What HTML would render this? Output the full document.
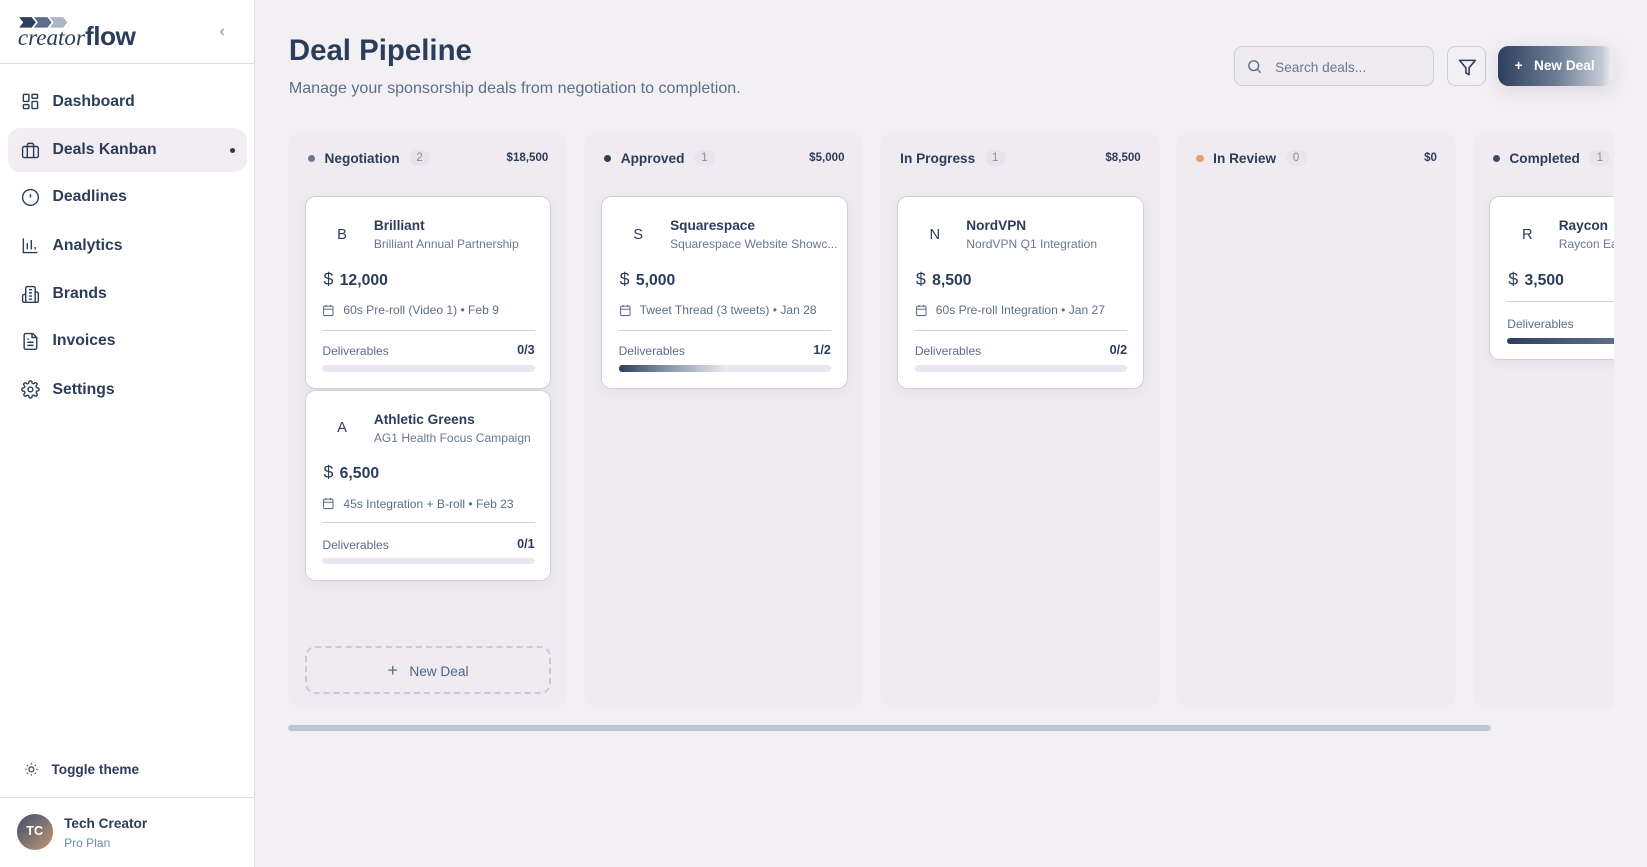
<!DOCTYPE html>
<html><head><meta charset="utf-8">
<style>
html{zoom:1.0504}
*{box-sizing:border-box;margin:0;padding:0}
body{width:1568px;height:825px;overflow:hidden;background:#f3f0f4;font-family:"Liberation Sans",sans-serif;color:#2c3d5a;position:relative}
.side{position:absolute;left:0;top:0;width:243px;height:825px;background:#fff;border-right:1px solid #e0dce6}
.logo{position:absolute;left:17px;top:14px}
.chev{position:absolute;left:209px;top:22px;color:#7b8aa3;font-size:15px}
.hr{position:absolute;left:0;width:242px;height:1px;background:#e0dce6}
.nav{position:absolute;left:8px;width:227px;height:42px;border-radius:12px;display:flex;align-items:center;padding-left:12px;font-size:15px;font-weight:600;color:#2c3d5a}
.nav svg{width:18px;height:18px;margin-right:12px;stroke:#2c3d5a;fill:none;stroke-width:1.8}
.nav.act{background:#f1edf3}
.dot{position:absolute;right:11px;top:19px;width:5px;height:5px;border-radius:50%;background:#2c3d5a}
.main h1{position:absolute;left:275px;top:32px;font-size:28px;font-weight:700;color:#2c3d5a}
.sub{position:absolute;left:275px;top:75px;font-size:15.3px;color:#5d6e88}
.search{position:absolute;left:1175px;top:44px;width:190px;height:38px;border:1px solid #c8d0de;border-radius:8px;background:#efecf1;font-size:13px;color:#6a7891;padding:12px 0 0 38px}
.search svg{position:absolute;left:10px;top:10px}
.filt{position:absolute;left:1378px;top:44px;width:37px;height:38px;border:1px solid #c8d0de;border-radius:8px;background:#f3f0f4}
.filt svg{position:absolute;left:9px;top:10px}
.nd{position:absolute;left:1426px;top:44px;width:110px;height:38px;border-radius:10px;background:linear-gradient(90deg,#2e3f5e 0%,#6a7b92 50%,#c3cad6 90%,rgba(243,240,244,0) 100%);color:#fff;font-size:13px;font-weight:700;padding:11px 0 0 16px;box-shadow:0 4px 18px rgba(120,110,140,.2)}
.board{position:absolute;left:274px;top:126px;width:1263px;height:550px;overflow:hidden}
.col{position:absolute;top:0;width:266px;height:548px;background:#efebf1;border-radius:12px}
.ch{position:absolute;left:19px;top:17px;font-size:13px;font-weight:600;color:#2c3d5a;display:flex;align-items:center}
.ch i{width:7px;height:7px;border-radius:50%;display:inline-block;margin-right:9px}
.ch b{font-weight:400;font-size:11px;color:#8090a5;background:#e8e4ec;border-radius:10px;padding:2px 7px;margin-left:9px}
.tot{position:absolute;right:18px;top:19px;font-size:11px;color:#2c3d5a;font-weight:600}
.card{position:absolute;left:16px;width:235px;background:#fff;border:1px solid #c9d1de;border-radius:10px;box-shadow:0 3px 10px rgba(120,110,140,.08)}
.lt{position:absolute;left:30px;top:28px;font-size:14px;color:#2c3d5a}
.nm{position:absolute;left:65px;top:20px;font-size:13px;font-weight:700;color:#2c3d5a;white-space:nowrap}
.ds{position:absolute;left:65px;top:38px;font-size:11.5px;color:#6a7891;white-space:nowrap}
.amt{position:absolute;left:17px;top:68px;font-size:15px;font-weight:700;color:#2c3d5a}
.amt span{font-size:17px;font-weight:400;margin-right:6px}
.cal{position:absolute;left:16px;top:101px;font-size:11.5px;color:#5d6e88;display:flex;align-items:center;white-space:nowrap}
.cal svg{margin-right:8px}
.div{position:absolute;left:16px;right:15px;height:1px;background:#c9d1de}
.dl{position:absolute;left:16px;font-size:11.5px;color:#5d6e88}
.dn{position:absolute;right:15px;font-size:12px;color:#2c3d5a;font-weight:600}
.bar{position:absolute;left:16px;right:15px;height:6px;border-radius:3px;background:#ebe7ee;overflow:hidden}
.bar i{display:block;height:100%;background:linear-gradient(90deg,#2e3f5e,#8f9db0,#ebe7ee)}
</style></head><body>
<div class="side">
 <div class="logo">
  <svg width="112" height="30" viewBox="0 0 112 30"><polygon points="1,2 13,2 17,7 13,12 1,12 5,7" fill="#2e3f5e"/><polygon points="15,2 28,2 32,7 28,12 15,12 19,7" fill="#5d6e88"/><polygon points="30,2 43,2 47,7 43,12 30,12 34,7" fill="#aab5c5"/></svg>
  <div style="position:absolute;left:0;top:6px;white-space:nowrap;color:#2c3d5a"><span style="font-family:'Liberation Serif',serif;font-style:italic;font-size:22px">creator</span><span style="font-size:25px;font-weight:700;letter-spacing:-0.5px">flow</span></div>
 </div>
 <div class="chev">‹</div>
 <div class="hr" style="top:60px"></div>
 <div class="nav" style="top:76px"><svg viewBox="0 0 24 24"><rect x="3" y="3" width="7" height="9" rx="1"/><rect x="14" y="3" width="7" height="5" rx="1"/><rect x="14" y="12" width="7" height="9" rx="1"/><rect x="3" y="16" width="7" height="5" rx="1"/></svg>Dashboard</div>
 <div class="nav act" style="top:122px"><svg viewBox="0 0 24 24"><rect x="2" y="7" width="20" height="14" rx="2"/><path d="M16 21V5a2 2 0 0 0-2-2h-4a2 2 0 0 0-2 2v16"/></svg>Deals Kanban<span class="dot"></span></div>
 <div class="nav" style="top:167px"><svg viewBox="0 0 24 24"><circle cx="12" cy="12" r="10"/><path d="M12 8v4M12 16h.01"/></svg>Deadlines</div>
 <div class="nav" style="top:213px"><svg viewBox="0 0 24 24"><path d="M3 3v18h18M8 17V9M13 17V5M18 17v-3"/></svg>Analytics</div>
 <div class="nav" style="top:259px"><svg viewBox="0 0 24 24"><path d="M6 22V4a2 2 0 0 1 2-2h8a2 2 0 0 1 2 2v18z"/><path d="M6 12H4a2 2 0 0 0-2 2v6a2 2 0 0 0 2 2h2M18 9h2a2 2 0 0 1 2 2v9a2 2 0 0 1-2 2h-2M10 6h4M10 10h4M10 14h4M10 18h4"/></svg>Brands</div>
 <div class="nav" style="top:304px"><svg viewBox="0 0 24 24"><path d="M15 2H6a2 2 0 0 0-2 2v16a2 2 0 0 0 2 2h12a2 2 0 0 0 2-2V7z"/><path d="M14 2v5h5M8 13h8M8 17h8M8 9h2"/></svg>Invoices</div>
 <div class="nav" style="top:350px"><svg viewBox="0 0 24 24"><circle cx="12" cy="12" r="3"/><path d="M19.4 15a1.7 1.7 0 0 0 .3 1.8l.1.1a2 2 0 1 1-2.8 2.8l-.1-.1a1.7 1.7 0 0 0-2.8 1.2V21a2 2 0 1 1-4 0v-.1a1.7 1.7 0 0 0-2.8-1.2l-.1.1a2 2 0 1 1-2.8-2.8l.1-.1a1.7 1.7 0 0 0-1.2-2.8H3a2 2 0 1 1 0-4h.1a1.7 1.7 0 0 0 1.2-2.8l-.1-.1a2 2 0 1 1 2.8-2.8l.1.1a1.7 1.7 0 0 0 2.8-1.2V3a2 2 0 1 1 4 0v.1a1.7 1.7 0 0 0 2.8 1.2l.1-.1a2 2 0 1 1 2.8 2.8l-.1.1a1.7 1.7 0 0 0 1.2 2.8H21a2 2 0 1 1 0 4h-.1a1.7 1.7 0 0 0-1.5 1z"/></svg>Settings</div>
 <div style="position:absolute;left:23px;top:725px;font-size:13px;font-weight:600;display:flex;align-items:center"><svg width="14" height="14" viewBox="0 0 24 24" fill="none" stroke="#2c3d5a" stroke-width="2" style="margin-right:12px"><circle cx="12" cy="12" r="4"/><path d="M12 2v2M12 20v2M4.9 4.9l1.4 1.4M17.7 17.7l1.4 1.4M2 12h2M20 12h2M4.9 19.1l1.4-1.4M17.7 6.3l1.4-1.4"/></svg>Toggle theme</div>
 <div class="hr" style="top:759px"></div>
 <div style="position:absolute;left:16px;top:775px;width:34px;height:34px;border-radius:50%;background:linear-gradient(135deg,#3e4f6e,#c49574);color:#fff;font-size:12px;font-weight:700;text-align:center;line-height:34px">TC</div>
 <div style="position:absolute;left:61px;top:777px;font-size:13px;font-weight:600">Tech Creator</div>
 <div style="position:absolute;left:61px;top:796px;font-size:11.5px;color:#6a8aa8">Pro Plan</div>
</div>

<div class="main">
 <h1>Deal Pipeline</h1>
 <div class="sub">Manage your sponsorship deals from negotiation to completion.</div>
 <div class="search"><svg width="16" height="16" viewBox="0 0 24 24" fill="none" stroke="#5d6e88" stroke-width="2"><circle cx="11" cy="11" r="7"/><path d="M21 21l-4.3-4.3"/></svg>Search deals...</div>
 <div class="filt"><svg width="18" height="18" viewBox="0 0 24 24" fill="none" stroke="#2c3d5a" stroke-width="2" stroke-linejoin="round"><path d="M22 3H2l8 9.5V19l4 2v-8.5z"/></svg></div>
 <div class="nd">+&nbsp;&nbsp; New Deal</div>

 <div class="board">
  <div class="col" style="left:0">
   <div class="ch"><i style="background:#6a7891"></i>Negotiation<b>2</b></div><div class="tot">$18,500</div>
   <div class="card" style="top:61px;height:183px">
    <div class="lt">B</div><div class="nm">Brilliant</div><div class="ds">Brilliant Annual Partnership</div>
    <div class="amt"><span>$</span>12,000</div>
    <div class="cal"><svg width="12" height="12" viewBox="0 0 24 24" fill="none" stroke="#5d6e88" stroke-width="2"><rect x="3" y="4" width="18" height="18" rx="2"/><path d="M16 2v4M8 2v4M3 10h18"/></svg>60s Pre-roll (Video 1) • Feb 9</div>
    <div class="div" style="top:126px"></div><div class="dl" style="top:140px">Deliverables</div><div class="dn" style="top:139px">0/3</div>
    <div class="bar" style="top:160px"></div>
   </div>
   <div class="card" style="top:245px;height:182px">
    <div class="lt">A</div><div class="nm">Athletic Greens</div><div class="ds">AG1 Health Focus Campaign</div>
    <div class="amt"><span>$</span>6,500</div>
    <div class="cal"><svg width="12" height="12" viewBox="0 0 24 24" fill="none" stroke="#5d6e88" stroke-width="2"><rect x="3" y="4" width="18" height="18" rx="2"/><path d="M16 2v4M8 2v4M3 10h18"/></svg>45s Integration + B-roll • Feb 23</div>
    <div class="div" style="top:125px"></div><div class="dl" style="top:140px">Deliverables</div><div class="dn" style="top:139px">0/1</div>
    <div class="bar" style="top:159px"></div>
   </div>
   <div style="position:absolute;left:16px;top:489px;width:235px;height:46px;border:2px dashed #c4ccda;border-radius:10px;text-align:center;line-height:42px;font-size:13px;color:#4f6684"><span style="font-size:17px;color:#5d6e88">+</span>&nbsp;&nbsp; New Deal</div>
  </div>
  <div class="col" style="left:282px">
   <div class="ch"><i style="background:#2c3d5a"></i>Approved<b>1</b></div><div class="tot">$5,000</div>
   <div class="card" style="top:61px;height:183px">
    <div class="lt">S</div><div class="nm">Squarespace</div><div class="ds">Squarespace Website Showc...</div>
    <div class="amt"><span>$</span>5,000</div>
    <div class="cal"><svg width="12" height="12" viewBox="0 0 24 24" fill="none" stroke="#5d6e88" stroke-width="2"><rect x="3" y="4" width="18" height="18" rx="2"/><path d="M16 2v4M8 2v4M3 10h18"/></svg>Tweet Thread (3 tweets) • Jan 28</div>
    <div class="div" style="top:126px"></div><div class="dl" style="top:140px">Deliverables</div><div class="dn" style="top:139px">1/2</div>
    <div class="bar" style="top:160px"><i style="width:50%"></i></div>
   </div>
  </div>
  <div class="col" style="left:564px">
   <div class="ch">In Progress<b>1</b></div><div class="tot">$8,500</div>
   <div class="card" style="top:61px;height:183px">
    <div class="lt">N</div><div class="nm">NordVPN</div><div class="ds">NordVPN Q1 Integration</div>
    <div class="amt"><span>$</span>8,500</div>
    <div class="cal"><svg width="12" height="12" viewBox="0 0 24 24" fill="none" stroke="#5d6e88" stroke-width="2"><rect x="3" y="4" width="18" height="18" rx="2"/><path d="M16 2v4M8 2v4M3 10h18"/></svg>60s Pre-roll Integration • Jan 27</div>
    <div class="div" style="top:126px"></div><div class="dl" style="top:140px">Deliverables</div><div class="dn" style="top:139px">0/2</div>
    <div class="bar" style="top:160px"></div>
   </div>
  </div>
  <div class="col" style="left:846px">
   <div class="ch"><i style="background:#e0a070"></i>In Review<b>0</b></div><div class="tot">$0</div>
  </div>
  <div class="col" style="left:1128px">
   <div class="ch"><i style="background:#3e4a60"></i>Completed<b>1</b></div>
   <div class="card" style="top:61px;height:156px">
    <div class="lt">R</div><div class="nm">Raycon</div><div class="ds">Raycon Earbuds Review</div>
    <div class="amt"><span>$</span>3,500</div>
    <div class="div" style="top:99px"></div><div class="dl" style="top:114px">Deliverables</div>
    <div class="bar" style="top:134px"><i style="width:100%;background:linear-gradient(90deg,#2e3f5e,#8f9db0)"></i></div>
   </div>
  </div>
 </div>
 <div style="position:absolute;left:274px;top:690px;width:1145px;height:6px;border-radius:3px;background:#bcc6d5"></div>
</div>
</body></html>
